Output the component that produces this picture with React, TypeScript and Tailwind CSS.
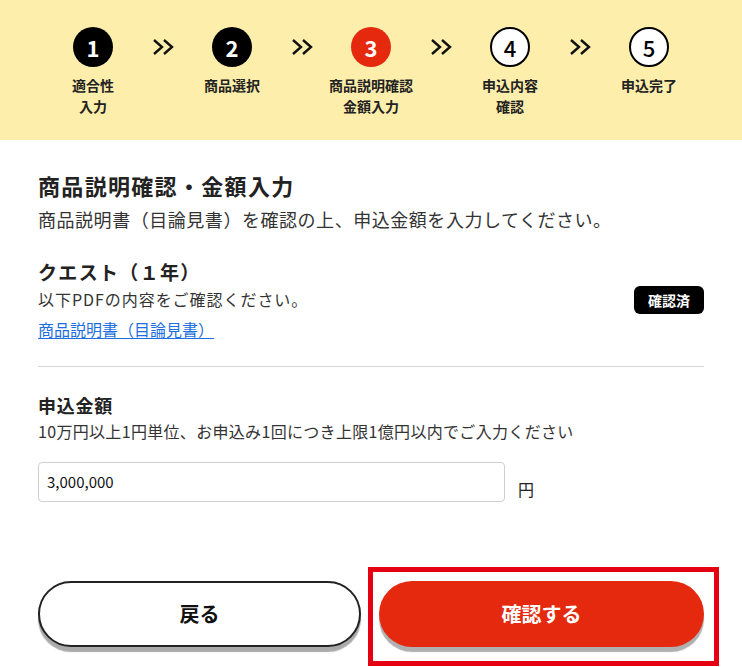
import { Fragment } from "react";

const font = { fontFamily: '"Noto Sans CJK JP", "Noto Sans", sans-serif' };

type Step = { no: string; label: string[]; state: "done" | "current" | "todo" };

const steps: Step[] = [
  { no: "1", label: ["適合性", "入力"], state: "done" },
  { no: "2", label: ["商品選択"], state: "done" },
  { no: "3", label: ["商品説明確認", "金額入力"], state: "current" },
  { no: "4", label: ["申込内容", "確認"], state: "todo" },
  { no: "5", label: ["申込完了"], state: "todo" },
];

function Chevrons() {
  return (
    <svg width="24" height="20" viewBox="0 0 24 20" fill="none" stroke="#111" strokeWidth="2.4">
      <polyline points="3,3 11,10 3,17" />
      <polyline points="13,3 21,10 13,17" />
    </svg>
  );
}

function StepCircle({ step }: { step: Step }) {
  const cls =
    step.state === "done"
      ? "bg-black text-white font-bold"
      : step.state === "current"
        ? "bg-[#e4290e] text-white font-bold"
        : "bg-white text-black border-2 border-black font-medium";
  return (
    <div className={`w-[40px] h-[40px] rounded-full flex items-center justify-center text-[22px] leading-none ${cls}`}>
      {step.no}
    </div>
  );
}

export default function App() {
  return (
    <div className="w-[742px] h-[667px] bg-white overflow-hidden" style={font}>
      {/* Steps */}
      <div className="h-[140px] bg-[#fdeeab] pt-[27px] flex justify-center">
        {steps.map((s, i) => (
          <div key={s.no} className="flex">
            <div className="w-[100px] flex flex-col items-center">
              <StepCircle step={s} />
              <p className="mt-[8px] text-[14px] leading-[21px] font-bold text-[#222] text-center">
                {s.label.map((l, j) => (
                  <Fragment key={l}>
                    {j > 0 && <br />}
                    {l}
                  </Fragment>
                ))}
              </p>
            </div>
            {i < steps.length - 1 && (
              <div className="w-[39px] h-[40px] flex items-center justify-center">
                <Chevrons />
              </div>
            )}
          </div>
        ))}
      </div>

      <div className="px-[38px]">
        <h1 className="mt-[30px] text-[22px] leading-[30px] font-bold tracking-[0.06em] text-[#222]">
          商品説明確認・金額入力
        </h1>
        <p className="mt-[6px] text-[18px] leading-[26px] tracking-[0.03em] text-[#333]">
          商品説明書（目論見書）を確認の上、申込金額を入力してください。
        </p>

        {/* Product */}
        <div className="mt-[27px] flex items-center justify-between">
          <div>
            <div className="text-[19px] leading-[26px] font-bold tracking-[0.07em] text-[#222]">クエスト（１年）</div>
            <div className="mt-[2px] text-[16px] leading-[24px] tracking-[0.06em] text-[#333]">
              以下PDFの内容をご確認ください。
            </div>
            <a href="#" className="block mt-[6px] text-[16px] leading-[24px] text-[#1d6fe0] underline underline-offset-2">
              商品説明書（目論見書）
            </a>
          </div>
          <div className="w-[70px] h-[28px] rounded-[6px] bg-black text-white text-[14px] font-bold flex items-center justify-center">
            確認済
          </div>
        </div>

        <div className="mt-[25px] border-t border-[#d4d4d4]" />

        {/* Amount */}
        <div className="mt-[25px] text-[18px] leading-[26px] font-bold tracking-[0.04em] text-[#222]">申込金額</div>
        <div className="mt-[1px] text-[16px] leading-[24px] tracking-[0.02em] text-[#333]">
          10万円以上1円単位、お申込み1回につき上限1億円以内でご入力ください
        </div>
        <div className="mt-[19px] flex items-end gap-[13px]">
          <div className="w-[467px] h-[40px] border border-[#cfcfcf] rounded-[4px] flex items-center px-[8px] text-[15px] text-[#111]">
            3,000,000
          </div>
          <span className="text-[16px] leading-[22px] text-[#222] mb-[2px]">円</span>
        </div>

        {/* Buttons */}
        <div className="mt-[79px] flex gap-[18px]">
          <button className="w-[325px] h-[66px] rounded-full bg-white border-2 border-[#222] shadow-[0_5px_1px_#aaaaaa] text-[20px] font-bold text-[#111]">
            戻る
          </button>
          <div className="relative">
            <button className="w-[325px] h-[66px] rounded-full bg-[#e4290e] shadow-[0_5px_1px_#b0b0b0] text-[20px] font-bold text-white">
              確認する
            </button>
            <span className="absolute left-[-11px] right-[-15px] top-[-14px] bottom-[-19px] border-[5px] border-[#e50012] pointer-events-none" />
          </div>
        </div>
      </div>
    </div>
  );
}
